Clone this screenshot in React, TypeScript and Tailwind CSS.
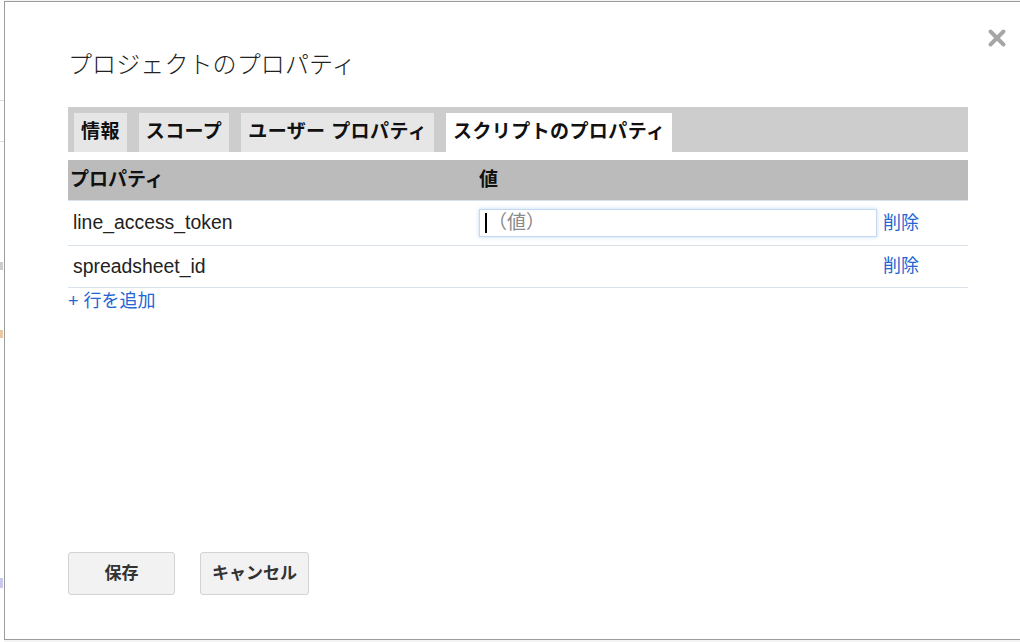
import { X } from "lucide-react";

const font = "font-['Liberation_Sans','Noto_Sans_CJK_JP',sans-serif]";

// タブの一覧
const tabs = [
  { label: "情報", active: false },
  { label: "スコープ", active: false },
  { label: "ユーザー プロパティ", active: false },
  { label: "スクリプトのプロパティ", active: true },
];

type RowProps = {
  name: string;
  editing?: boolean;
};

function PropertyRow({ name, editing }: RowProps) {
  return (
    <div
      className={`flex items-center border-b border-[#d9e1ea] ${
        editing ? "h-[45px]" : "h-[42px]"
      }`}>
      <div className="w-[411px] pl-[5px] text-[19.4px] text-[#222]">{name}</div>
      <div className="w-[398px] h-[28px]">
        {editing && (
          <div className="flex items-center h-full border border-[#c3d9f3] shadow-[0_0_4px_rgba(120,170,230,0.45)] pl-[5px]">
            <span className="w-[2px] h-[20px] bg-black" />
            <span className="ml-[1px] text-[19px] text-[#8a8a8a]">（値）</span>
          </div>
        )}
      </div>
      <a className="ml-[6px] text-[18px] text-[#2265d3] cursor-pointer">削除</a>
    </div>
  );
}

export default function App() {
  return (
    <div className={`relative w-[1020px] h-[642px] overflow-hidden bg-[#f4f4f4] ${font}`}>
      {/* 背景のページの切れ端 */}
      <div className="absolute left-0 top-0 w-[4px] h-full bg-white">
        <div className="mt-[100px] h-[1px] bg-[#ddd]" />
        <div className="mt-[40px] h-[1px] bg-[#ddd]" />
        <div className="mt-[120px] h-[8px] w-[3px] bg-[#ccc]" />
        <div className="mt-[60px] h-[8px] w-[3px] bg-[#e9c9a0]" />
        <div className="mt-[240px] h-[10px] w-[3px] bg-[#c9c9ee]" />
      </div>

      {/* ダイアログ */}
      <div className="absolute left-[4px] top-[1px] w-[1100px] h-[639px] bg-white border border-[#9c9c9c] flex flex-col pl-[63px] pt-[48px] pb-[44px]">
        <X
          className="absolute left-[979px] top-[23px] text-[#a6a6a6]"
          size={26}
          strokeWidth={3.6}
        />

        <h1 className="text-[24px] leading-[30px] font-light text-[#222] tracking-[0.1px]">
          プロジェクトのプロパティ
        </h1>

        <div className="w-[900px] mt-[27px]">
          <div className="flex items-end gap-3 h-[45px] bg-[#cdcdcd] pl-[6px]">
            {tabs.map((tab) => (
              <div
                key={tab.label}
                className={`h-[39px] px-[7px] flex items-center text-[19px] font-bold tracking-[0.4px] text-[#111] whitespace-nowrap ${
                  tab.active ? "bg-white" : "bg-[#e6e6e6]"
                }`}>
                {tab.label}
              </div>
            ))}
          </div>

          <div className="mt-[8px] flex items-center h-[41px] bg-[#bbbbbb] border-b border-[#d9e1ea] text-[19px] font-bold text-[#111]">
            <div className="w-[411px] pl-[2px]">プロパティ</div>
            <div>値</div>
          </div>

          <PropertyRow name="line_access_token" editing />
          <PropertyRow name="spreadsheet_id" />

          <a className="block mt-[1px] text-[18px] leading-[24px] text-[#2265d3] cursor-pointer">
            + 行を追加
          </a>
        </div>

        <div className="mt-auto flex gap-[25px]">
          <button className="w-[107px] h-[43px] rounded-[3px] border border-[#d3d3d3] bg-[#f2f2f2] text-[17px] font-bold text-[#333]">
            保存
          </button>
          <button className="w-[109px] h-[43px] rounded-[3px] border border-[#d3d3d3] bg-[#f2f2f2] text-[17px] font-bold text-[#333]">
            キャンセル
          </button>
        </div>
      </div>
    </div>
  );
}
